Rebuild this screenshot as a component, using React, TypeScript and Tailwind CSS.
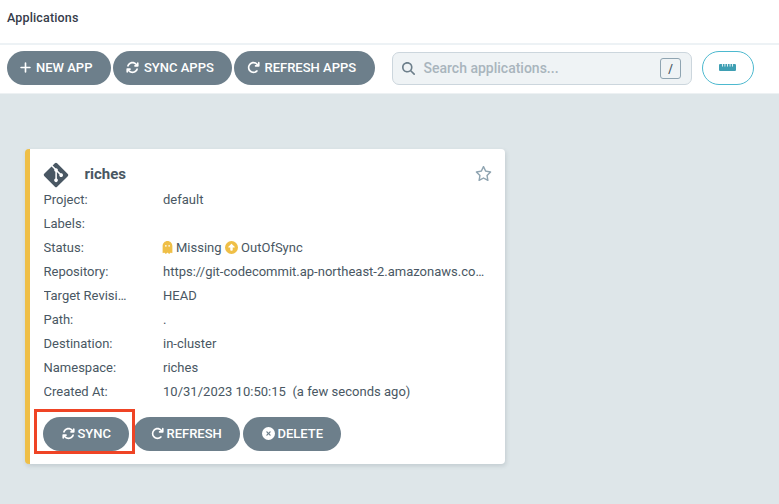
import React from 'react';
import {
  FaPlus, FaArrowsRotate, FaArrowRotateRight, FaMagnifyingGlass, FaRulerHorizontal,
  FaGitAlt, FaRegStar, FaGhost, FaCircleUp, FaCircleXmark,
} from 'react-icons/fa6';

function Pill({ icon, label, className }: { icon: React.ReactNode; label: string; className: string }) {
  return (
    <button className={`flex h-[34px] shrink-0 items-center rounded-full bg-[#6d7f8b] text-[13px] font-medium whitespace-nowrap text-white ${className}`}>
      <span className="mb-[2px]">{icon}</span>
      <span>{label}</span>
    </button>
  );
}

function Row({ label, children }: { label: string; children?: React.ReactNode }) {
  return (
    <div className="flex h-6 items-center">
      <div className="w-[83px] truncate">{label}</div>
      <div className="ml-[36.5px] flex w-[322px] items-center">{children}</div>
    </div>
  );
}

export default function App() {
  return (
    <div className="flex h-[504px] w-[779px] flex-col overflow-hidden bg-[#dee6e9] font-['Roboto',sans-serif] text-[13px] text-[#495763]">
      <header className="h-[45px] shrink-0 border-b-2 border-[#edf2f5] bg-white pt-2 pl-[7px] text-[12.5px] leading-5 font-medium tracking-[0.15px] text-[#363c4a]">
        Applications
      </header>
      <div className="flex h-[49px] shrink-0 border-b border-[#edf1f3] bg-white pt-[6px] pl-[7px]">
        <div className="flex gap-[2px]">
          <Pill className="w-[104px] gap-[4px] pl-[12px]" icon={<FaPlus size={13} />} label="NEW APP" />
          <Pill className="w-[119px] gap-[5px] pl-[13px]" icon={<FaArrowsRotate size={13} />} label="SYNC APPS" />
          <Pill className="w-[141px] gap-[5px] pl-[12.5px]" icon={<FaArrowRotateRight size={13} />} label="REFRESH APPS" />
        </div>
        <div className="mt-px ml-[17px] flex h-[33px] w-[300px] items-center rounded-[7px] border border-[#ccd6dd] bg-[#eff3f5] pr-[10px] pl-[9px]">
          <FaMagnifyingGlass size={13} className="text-[#6d7f8b]" />
          <span className="ml-[8.5px] flex-1 text-[14px] font-medium text-[#a9b5bd]">Search applications...</span>
          <span className="flex h-[21px] w-[21px] items-center justify-center rounded-[3px] border border-[#8fa4b1] text-[12px] font-medium">/</span>
        </div>
        <button className="ml-[10px] flex h-[34px] w-[52px] items-center justify-center rounded-full border border-[#4db9cf] text-[#3f9fb3]">
          <FaRulerHorizontal size={17} className="mr-px mb-px" />
        </button>
      </div>
      <main className="pt-[55px] pl-[25px]">
        <section className="h-[315px] w-[480px] rounded-[4px] border-l-[5px] border-[#efbf47] bg-white pt-[12px] pl-[13.5px] shadow-[1px_2px_4px_rgba(70,90,100,0.18)]">
          <div className="flex h-[27px] items-center pb-px">
            <FaGitAlt size={28} className="mt-px -ml-[1.5px] shrink-0" />
            <h1 className="ml-[14.5px] text-[15px] font-bold">riches</h1>
            <FaRegStar size={17} className="mr-[13.5px] mb-[2px] ml-auto text-[#8fa4b1]" />
          </div>
          <Row label="Project:">default</Row>
          <Row label="Labels:" />
          <Row label="Status:">
            <FaGhost size={13} className="mb-px -ml-[2px] text-[#efbf47]" />
            <span className="ml-[2px]">Missing</span>
            <FaCircleUp size={13} className="mb-px ml-[3px] text-[#efbf47]" />
            <span className="ml-[3.5px]">OutOfSync</span>
          </Row>
          <Row label="Repository:">
            <span className="truncate">https://git-codecommit.ap-northeast-2.amazonaws.com/v1/repos/riches</span>
          </Row>
          <Row label="Target Revision:">HEAD</Row>
          <Row label="Path:">.</Row>
          <Row label="Destination:">in-cluster</Row>
          <Row label="Namespace:">riches</Row>
          <Row label="Created At:">
            <span className="whitespace-pre tracking-[0.02px]">10/31/2023 10:50:15  (a few seconds ago)</span>
          </Row>
          <div className="relative -ml-[0.5px] mt-[13px] flex">
            <Pill className="w-[86px] gap-[3px] pl-[18.5px]" icon={<FaArrowsRotate size={13} />} label="SYNC" />
            <Pill className="ml-[4px] w-[107px] gap-[3px] pl-[17.5px]" icon={<FaArrowRotateRight size={13} />} label="REFRESH" />
            <Pill className="ml-[3px] w-[98px] gap-[3px] pl-[18.5px]" icon={<FaCircleXmark size={13} />} label="DELETE" />
            <div className="absolute -top-[8px] -left-[9px] h-[45px] w-[101px] border-[3px] border-[#ef4425]" />
          </div>
        </section>
      </main>
    </div>
  );
}
